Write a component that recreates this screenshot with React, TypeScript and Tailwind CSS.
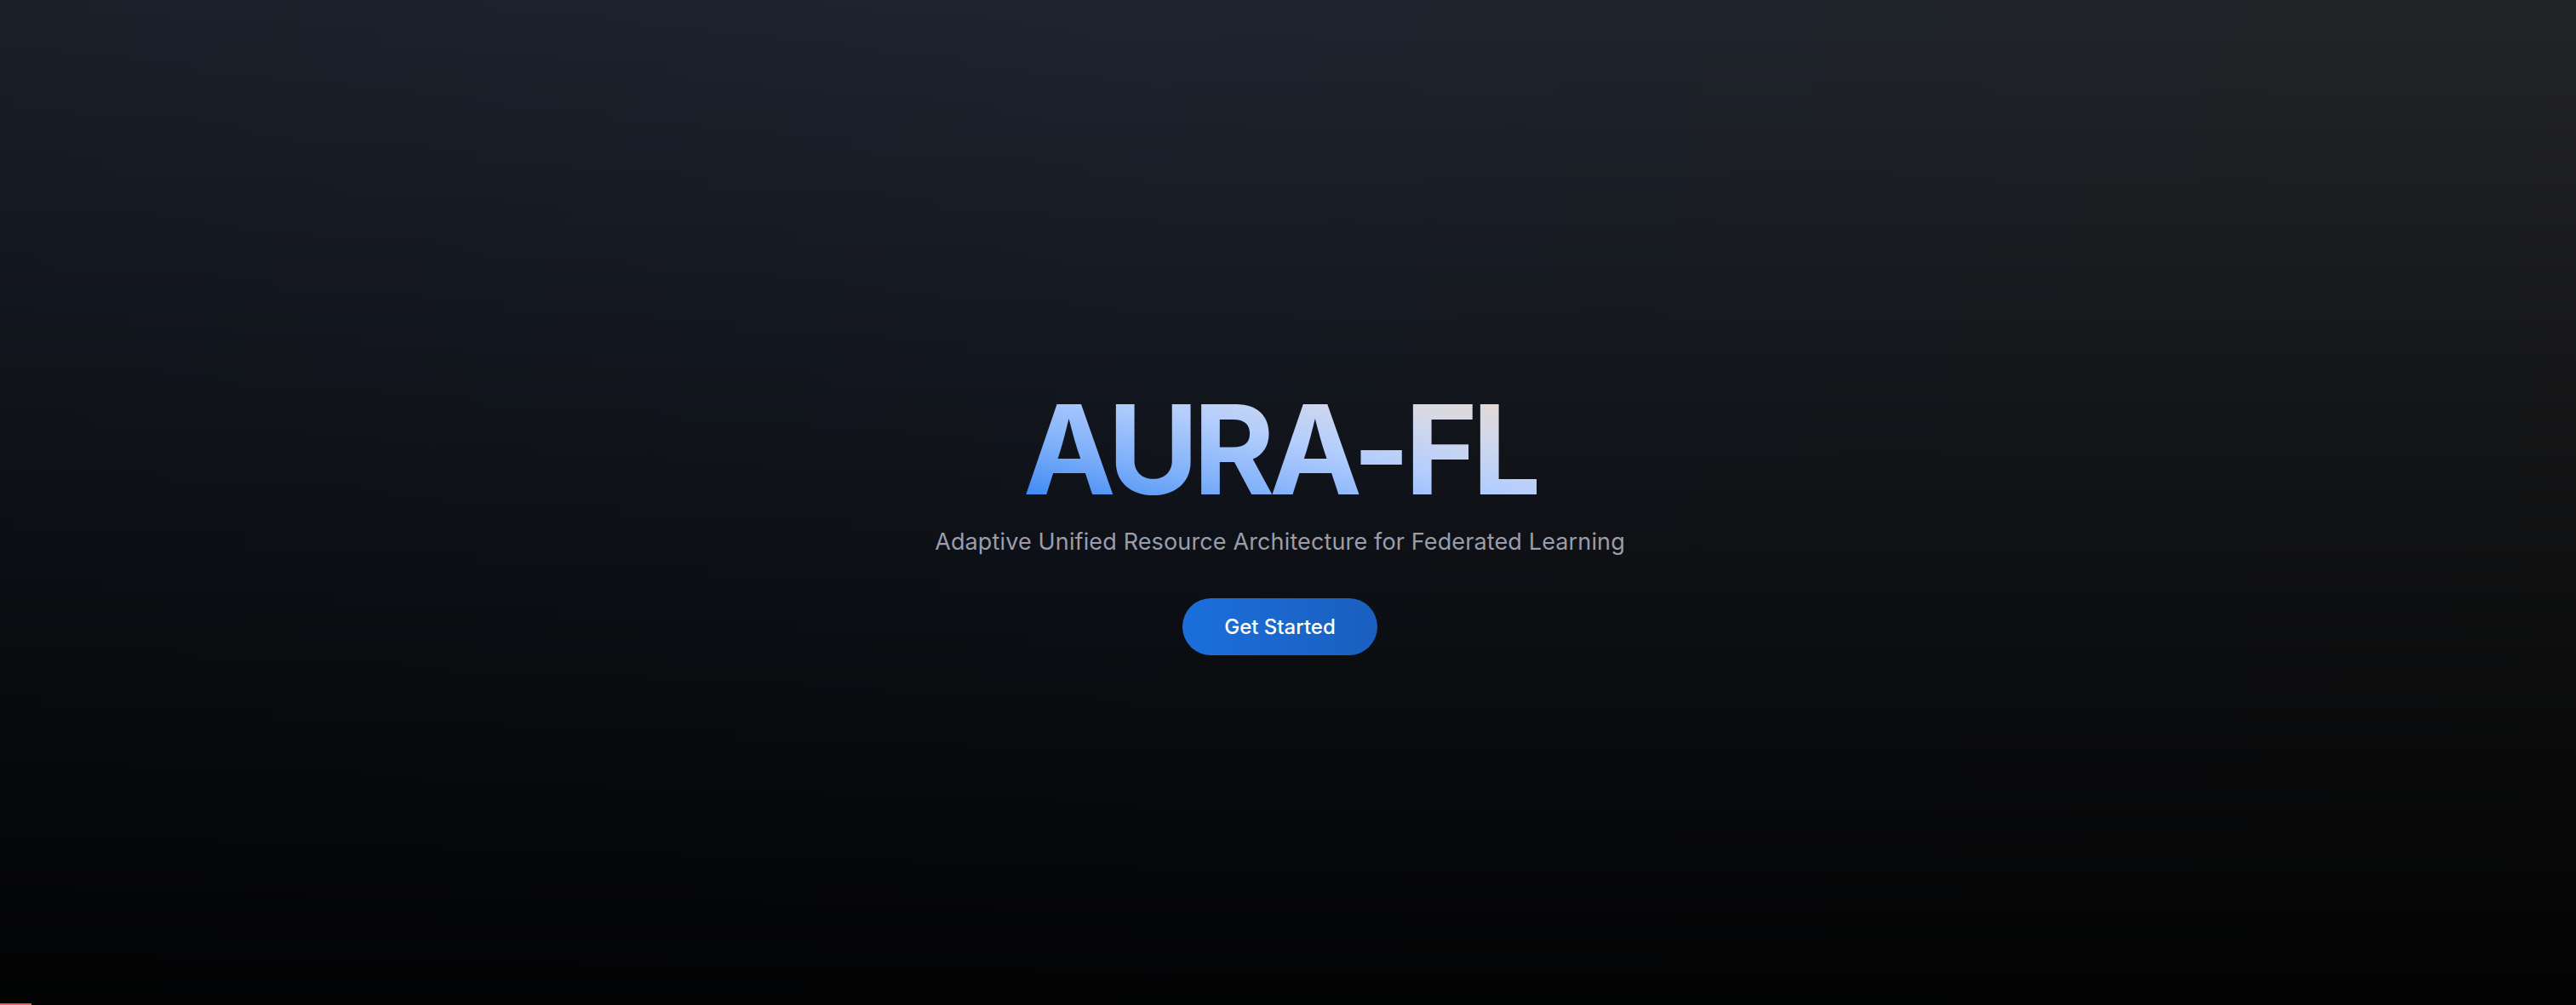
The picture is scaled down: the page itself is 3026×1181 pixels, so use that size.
import React from "react";

export default function App() {
    return (
        <div className="relative min-h-screen w-full overflow-hidden bg-[linear-gradient(180deg,rgba(0,0,0,0)_0%,rgba(0,0,0,0.5)_50%,rgba(0,0,0,0.72)_75%,rgba(0,0,0,0.93)_100%),linear-gradient(90deg,#1a1f2a_0%,#1e2431_45%,#232426_100%)] font-['Inter','Noto_Sans',sans-serif]">
            <main className="flex min-h-screen flex-col items-center justify-center pt-[44px] pr-[19px]">
                <h1 className="bg-[linear-gradient(to_top_right,#2d7ff0_0%,#7fb0fa_30%,#b4cefd_55%,#d2d8ea_75%,#efdac6_100%)] bg-clip-text text-[146px] font-bold leading-none tracking-[-0.045em] text-transparent">
                    AURA-FL
                </h1>
                <p className="mt-[18px] text-[27px] leading-9 tracking-[0.005em] text-[#9b9dab]">
                    Adaptive Unified Resource Architecture for Federated Learning
                </p>
                <button className="mt-12 h-[67px] rounded-full bg-[linear-gradient(90deg,#1b6fdb,#1a5fbf)] px-[49px] text-[24px] font-medium text-white">
                    Get Started
                </button>
            </main>
            <div className="absolute bottom-0 left-0 h-[2px] w-[37px] bg-[#f05858]" />
        </div>
    );
}
